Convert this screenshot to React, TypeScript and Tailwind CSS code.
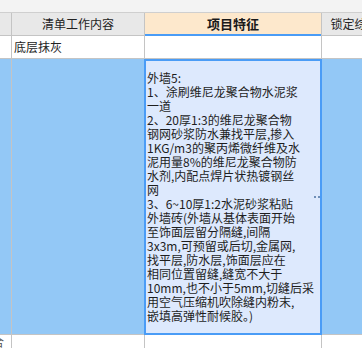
import React from 'react';

const lines = [
    '外墙5:',
    '1、涂刷维尼龙聚合物水泥浆',
    '一道',
    '2、20厚1:3的维尼龙聚合物',
    '钢网砂浆防水兼找平层,掺入',
    '1KG/m3的聚丙烯微纤维及水',
    '泥用量8%的维尼龙聚合物防',
    '水剂,内配点焊片状热镀钢丝',
    '网',
    '3、6~10厚1:2水泥砂浆粘贴',
    '外墙砖(外墙从基体表面开始',
    '至饰面层留分隔缝,间隔',
    '3x3m,可预留或后切,金属网,',
    '找平层,防水层,饰面层应在',
    '相同位置留缝,缝宽不大于',
    '10mm,也不小于5mm,切缝后采',
    '用空气压缩机吹除缝内粉末,',
    '嵌填高弹性耐候胶。)',
];

export default function App() {
    return (
        <div
            className="w-[362px] h-[348px] overflow-hidden bg-white text-[12px] text-[#222]"
            style={{ fontFamily: '"Noto Sans CJK SC", "Noto Sans", sans-serif' }}
        >
            {/* top strip */}
            <div className="h-[13px] bg-[#f3f3f3] border-b border-[#cfcfcf]" />

            {/* header */}
            <div className="flex h-[23px] w-[420px]">
                <div className="w-[12px] shrink-0 bg-[#e8e8e8] border-r border-b border-[#c4c4c4]" />
                <div className="w-[133px] shrink-0 bg-[#e8e8e8] border-r border-b border-[#c4c4c4] flex items-center justify-center">
                    清单工作内容
                </div>
                <div className="w-[176px] shrink-0 bg-[#fde8cc] border-b-2 border-[#4a9cf6] flex items-center justify-center font-bold text-[13px] text-[#1a1a1a]">
                    项目特征
                </div>
                <div className="w-[90px] shrink-0 bg-[#e8e8e8] border-l border-b border-[#c4c4c4] flex items-center justify-center whitespace-nowrap">
                    锁定综合单价
                </div>
            </div>

            {/* row 1 */}
            <div className="flex h-[23px] w-[420px]">
                <div className="w-[12px] shrink-0 border-r border-b border-[#c4c4c4]" />
                <div className="w-[133px] shrink-0 border-r border-b border-[#c4c4c4] flex items-center pl-[2px]">
                    底层抹灰
                </div>
                <div className="w-[176px] shrink-0 border-b border-[#c4c4c4]" />
                <div className="w-[90px] shrink-0 border-l border-b border-[#c4c4c4]" />
            </div>

            {/* row 2 (selected) */}
            <div className="flex h-[276px] w-[420px]">
                <div className="w-[12px] shrink-0 bg-[#93c8f6] border-r border-b border-[#c4c4c4]" />
                <div className="w-[132px] shrink-0 bg-[#93c8f6] border-b border-[#c4c4c4]" />
                <div className="w-[178px] shrink-0 bg-[#dde9fd] border-2 border-[#4a9cf6] flex items-center justify-between pl-px pr-[3px]">
                    <div className="leading-[14px] whitespace-nowrap text-[#1e1e1e]">
                        {lines.map((l, i) => (
                            <div key={i}>{l}</div>
                        ))}
                    </div>
                    <div className="flex gap-[2px]">
                        <span className="w-[2px] h-[2px] bg-[#6f8fb8]" />
                        <span className="w-[2px] h-[2px] bg-[#6f8fb8]" />
                        <span className="w-[2px] h-[2px] bg-[#6f8fb8]" />
                    </div>
                </div>
                <div className="w-[98px] shrink-0 bg-[#93c8f6] border-b border-[#c4c4c4]" />
            </div>

            {/* bottom row */}
            <div className="flex h-[14px] w-[420px]">
                <div className="w-[12px] shrink-0 border-r border-[#c4c4c4] overflow-hidden flex items-center">
                    <span className="-ml-[8px] text-[#555] leading-none">合</span>
                </div>
                <div className="w-[133px] shrink-0 border-r border-[#c4c4c4]" />
                <div className="w-[176px] shrink-0" />
                <div className="w-[90px] shrink-0 border-l border-[#c4c4c4]" />
            </div>
        </div>
    );
}
